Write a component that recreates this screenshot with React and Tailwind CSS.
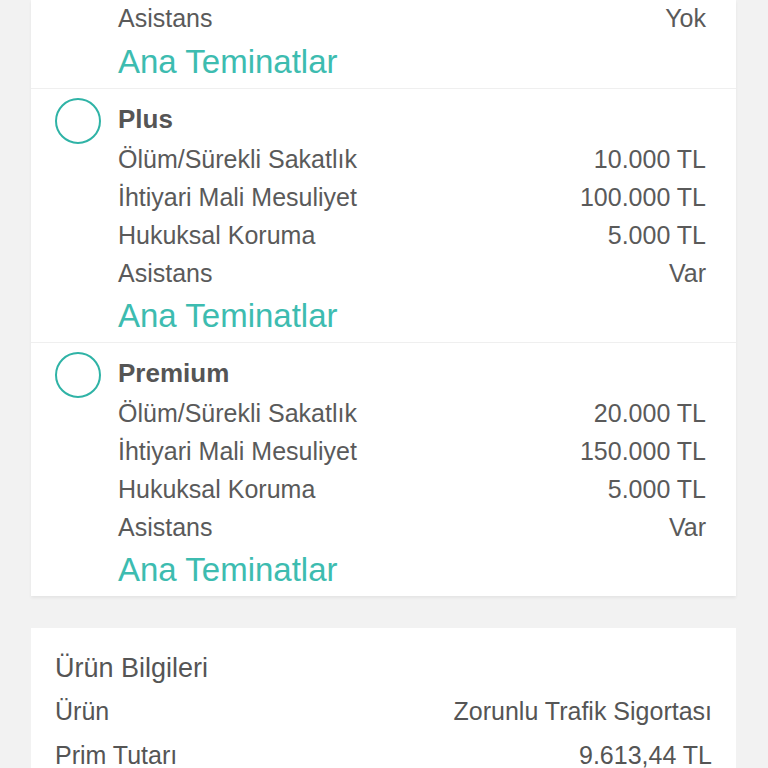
import React from "react";

const plans = [
  {
    name: "Plus",
    rows: [
      ["Ölüm/Sürekli Sakatlık", "10.000 TL"],
      ["İhtiyari Mali Mesuliyet", "100.000 TL"],
      ["Hukuksal Koruma", "5.000 TL"],
      ["Asistans", "Var"],
    ],
  },
  {
    name: "Premium",
    rows: [
      ["Ölüm/Sürekli Sakatlık", "20.000 TL"],
      ["İhtiyari Mali Mesuliyet", "150.000 TL"],
      ["Hukuksal Koruma", "5.000 TL"],
      ["Asistans", "Var"],
    ],
  },
];

function Row({ label, value }) {
  return (
    <div className="flex h-[38px] items-center justify-between text-[25px] text-[#5a5a5a]">
      <span>{label}</span>
      <span>{value}</span>
    </div>
  );
}

function Plan({ plan }) {
  return (
    <div className="border-t border-[#efefef] pt-[9px] pb-[6px] pl-[24px] pr-[30px]">
      <div className="flex h-[43px] items-start">
        <div className="h-[46px] w-[46px] shrink-0 rounded-full border-[2.5px] border-[#2fb3a6]" />
        <div className="ml-[17px] flex h-[42px] items-center text-[26px] font-bold text-[#555]">
          {plan.name}
        </div>
      </div>
      <div className="pl-[63px]">
        {plan.rows.map(([l, v]) => (
          <Row key={l} label={l} value={v} />
        ))}
        <div className="mt-[3px] flex h-[40px] items-center text-[33px] text-[#3dbcb0]">
          Ana Teminatlar
        </div>
      </div>
    </div>
  );
}

export default function App() {
  return (
    <div className="h-[768px] overflow-hidden bg-[#f2f2f2] font-['Liberation_Sans',Arial,sans-serif]">
      <div className="mx-[31px] w-[705px] bg-white shadow-[0_2px_3px_rgba(0,0,0,0.06)]">
        {/* önceki planın sonu */}
        <div className="pb-[6px] pl-[87px] pr-[30px]">
          <Row label="Asistans" value="Yok" />
          <div className="mt-1 flex h-[40px] items-center text-[33px] text-[#3dbcb0]">
            Ana Teminatlar
          </div>
        </div>
        {plans.map((p) => (
          <Plan key={p.name} plan={p} />
        ))}
      </div>

      <div className="mx-[31px] mt-[32px] w-[705px] bg-white px-[24px] pt-[22px] text-[#555]">
        <div className="flex h-[36px] items-center text-[27px]">Ürün Bilgileri</div>
        <div className="mt-[6px] flex h-[40px] items-center justify-between text-[25px]">
          <span>Ürün</span>
          <span>Zorunlu Trafik Sigortası</span>
        </div>
        <div className="mt-[4px] flex h-[40px] items-center justify-between text-[25px]">
          <span>Prim Tutarı</span>
          <span>9.613,44 TL</span>
        </div>
      </div>
    </div>
  );
}
